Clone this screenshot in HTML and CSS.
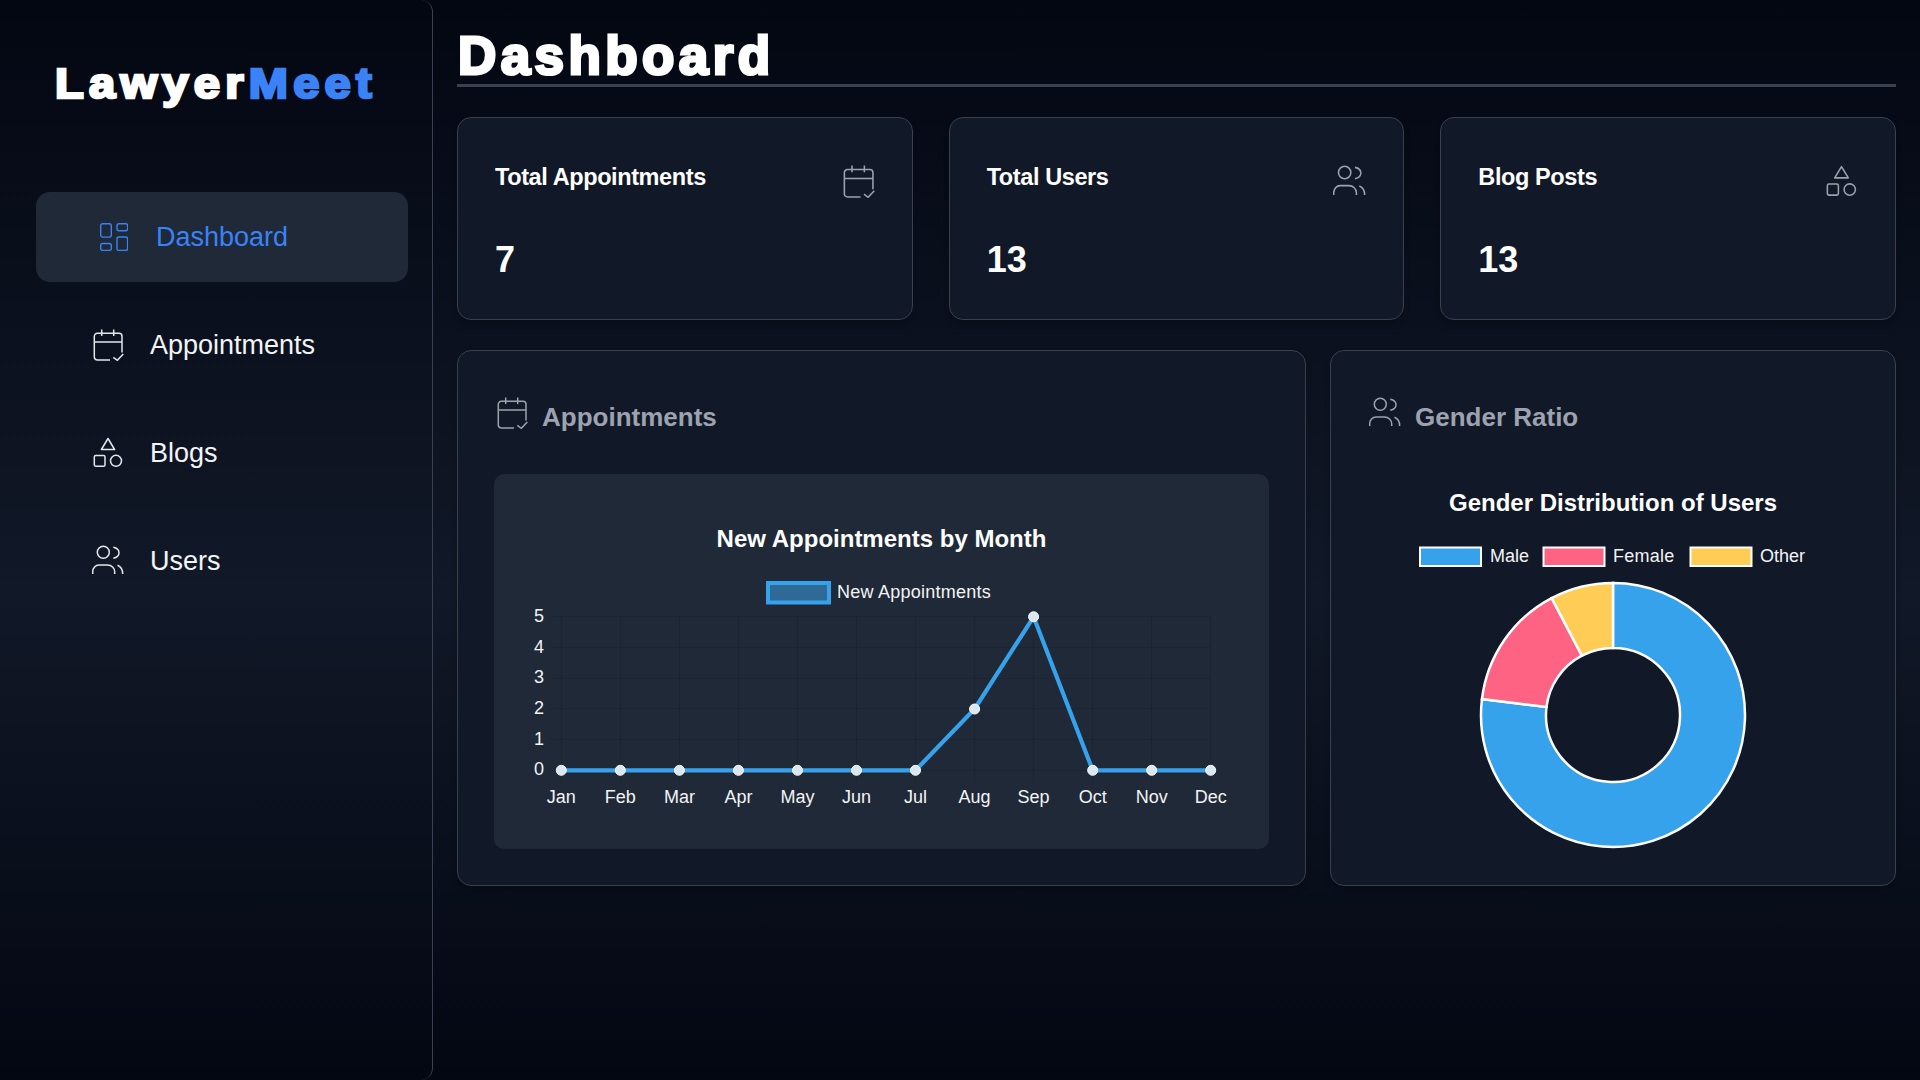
FILE: index.html
```html
<!DOCTYPE html>
<html lang="en">
<head>
  <meta charset="UTF-8">
  <title>LawyerMeet Dashboard</title>
  <link rel="stylesheet" href="styles.css">
</head>
<body>
  <aside class="sidebar">
    <div class="logo">Lawyer<span>Meet</span></div>
    <nav class="nav">
      <a class="nav-item active">
        <svg class="nav-icon" viewBox="0 0 28 28"><rect x="0.7" y="0.7" width="10.6" height="13.4" rx="2"/><rect x="17" y="0.7" width="10.6" height="7" rx="2"/><rect x="0.7" y="20.5" width="10.6" height="7" rx="2"/><rect x="17" y="14" width="10.6" height="13.4" rx="2"/></svg>
        <span>Dashboard</span>
      </a>
      <a class="nav-item">
        <svg class="icon" viewBox="0 0 32 32"><use href="#calendar"/></svg>
        <span>Appointments</span>
      </a>
      <a class="nav-item">
        <svg class="icon" viewBox="0 0 32 32"><use href="#shapes"/></svg>
        <span>Blogs</span>
      </a>
      <a class="nav-item">
        <svg class="icon" viewBox="0 0 32 32"><use href="#users"/></svg>
        <span>Users</span>
      </a>
    </nav>
  </aside>

  <main class="main">
    <h1 class="page-title">Dashboard</h1>

    <section class="stats">
      <div class="stat-card">
        <div class="stat-head">
          <h3>Total Appointments</h3>
          <svg class="icon muted" viewBox="0 0 32 32"><use href="#calendar"/></svg>
        </div>
        <div class="stat-value">7</div>
      </div>
      <div class="stat-card">
        <div class="stat-head">
          <h3>Total Users</h3>
          <svg class="icon muted" viewBox="0 0 32 32"><use href="#users"/></svg>
        </div>
        <div class="stat-value">13</div>
      </div>
      <div class="stat-card">
        <div class="stat-head">
          <h3>Blog Posts</h3>
          <svg class="icon muted" viewBox="0 0 32 32"><use href="#shapes"/></svg>
        </div>
        <div class="stat-value">13</div>
      </div>
    </section>

    <section class="panels">
      <div class="panel">
        <h2 class="panel-title">
          <svg class="icon muted" viewBox="0 0 32 32"><use href="#calendar"/></svg>
          <span>Appointments</span>
        </h2>
        <div class="chart-box">
          <svg class="chart" viewBox="494 474 775 375">
            <text class="chart-title" x="881.5" y="547" text-anchor="middle">New Appointments by Month</text>
            <rect x="768" y="583" width="61" height="19.5" fill="#2f6a96" stroke="#36a2eb" stroke-width="4"/>
            <text class="chart-text wide" x="837" y="597.5">New Appointments</text>

            <g class="grid">
              <path d="M550 616.5H1211M550 647.5H1211M550 678.5H1211M550 708.5H1211M550 739.5H1211M550 770.5H1211"/>
              <path d="M561.5 616V782M620.5 616V782M679.5 616V782M738.5 616V782M797.5 616V782M856.5 616V782M915.5 616V782M974.5 616V782M1033.5 616V782M1092.5 616V782M1151.5 616V782M1210.5 616V782"/>
            </g>

            <g class="chart-text" text-anchor="end">
              <text x="544" y="622">5</text>
              <text x="544" y="652.5">4</text>
              <text x="544" y="683">3</text>
              <text x="544" y="713.500">2</text>
              <text x="544" y="744.500">1</text>
              <text x="544" y="775">0</text>
            </g>
            <g class="chart-text" text-anchor="middle">
              <text x="561.3" y="802.500">Jan</text>
              <text x="620.3" y="802.500">Feb</text>
              <text x="679.4" y="802.500">Mar</text>
              <text x="738.4" y="802.500">Apr</text>
              <text x="797.5" y="802.500">May</text>
              <text x="856.5" y="802.500">Jun</text>
              <text x="915.5" y="802.500">Jul</text>
              <text x="974.6" y="802.500">Aug</text>
              <text x="1033.6" y="802.500">Sep</text>
              <text x="1092.7" y="802.500">Oct</text>
              <text x="1151.7" y="802.500">Nov</text>
              <text x="1210.7" y="802.500">Dec</text>
            </g>

            <polyline class="line" points="561.3,770.3 620.3,770.3 679.4,770.3 738.4,770.3 797.5,770.3 856.5,770.3 915.5,770.3 974.6,709 1033.6,616.8 1092.7,770.3 1151.7,770.3 1210.7,770.3"/>
            <g class="points">
              <circle cx="561.3" cy="770.3" r="5"/>
              <circle cx="620.3" cy="770.3" r="5"/>
              <circle cx="679.4" cy="770.3" r="5"/>
              <circle cx="738.4" cy="770.3" r="5"/>
              <circle cx="797.5" cy="770.3" r="5"/>
              <circle cx="856.5" cy="770.3" r="5"/>
              <circle cx="915.5" cy="770.3" r="5"/>
              <circle cx="974.6" cy="709" r="5"/>
              <circle cx="1033.6" cy="616.8" r="5"/>
              <circle cx="1092.7" cy="770.3" r="5"/>
              <circle cx="1151.7" cy="770.3" r="5"/>
              <circle cx="1210.7" cy="770.3" r="5"/>
            </g>
          </svg>
        </div>
      </div>

      <div class="panel">
        <h2 class="panel-title">
          <svg class="icon muted" viewBox="0 0 32 32"><use href="#users"/></svg>
          <span>Gender Ratio</span>
        </h2>
        <div class="donut-box">
          <svg class="chart" viewBox="1367 474 492 375">
            <text class="chart-title" x="1613" y="511" text-anchor="middle">Gender Distribution of Users</text>

            <g class="legend-box">
              <rect x="1420" y="547.5" width="61" height="18.5" fill="#36a2eb"/>
              <rect x="1543.5" y="547.5" width="61" height="18.5" fill="#ff6384"/>
              <rect x="1690.5" y="547.5" width="61" height="18.5" fill="#ffcd56"/>
            </g>
            <text class="chart-text" x="1490" y="562">Male</text>
            <text class="chart-text wide" x="1613" y="562">Female</text>
            <text class="chart-text" x="1760" y="562">Other</text>

            <g class="slices" transform="translate(1613 715)">
              <path fill="#36a2eb" d="M0 -132A132 132 0 1 1 -131.04 -15.9L-66.5 -8.07A67 67 0 1 0 0 -67Z"/>
              <path fill="#ff6384" d="M-131.04 -15.9A132 132 0 0 1 -61.34 -116.9L-31.13 -59.33A67 67 0 0 0 -66.5 -8.07Z"/>
              <path fill="#ffcd56" d="M-61.34 -116.9A132 132 0 0 1 0 -132L0 -67A67 67 0 0 0 -31.13 -59.33Z"/>
            </g>
          </svg>
        </div>
      </div>
    </section>
  </main>

  <svg class="defs" width="0" height="0">
    <defs>
      <g id="calendar">
        <path d="M18 31H5.3a3 3 0 0 1-3-3V7.3a3 3 0 0 1 3-3H27a3 3 0 0 1 3 3V23.5"/>
        <path d="M2.3 13H30M9.7 0.5V7M21.7 0.5V7"/>
        <path d="M21.3 28.3L25.3 31.3L31.3 25"/>
      </g>
      <g id="shapes">
        <path d="M16 1.5L22.6 12.500H9.4Z" stroke-linejoin="round"/>
        <rect x="2.3" y="18.500" width="10.7" height="10.7" rx="1.5"/>
        <circle cx="24" cy="23.800" r="5.5"/>
      </g>
      <g id="users">
        <circle cx="11.3" cy="7.3" r="6"/>
        <path d="M21.3 2.3C25 3 27 5.200 27 7.800C27 10.400 25 12.600 21.3 13.300"/>
        <path d="M0.700 29V27C0.700 23 3.500 20 7 20H15.500C19.500 20 22.700 23 22.700 27V29"/>
        <path d="M25.500 20.300C28.500 21.500 30.700 24.500 30.700 29"/>
      </g>
    </defs>
  </svg>
</body>
</html>
```

FILE: styles.css
```css
* {
  box-sizing: border-box;
}

body {
  margin: 0;
  height: 1080px;
  display: flex;
  overflow: hidden;
  font-family: "Liberation Sans", Arial, sans-serif;
  color: #fff;
  background: linear-gradient(to bottom, #030712, #111827 55%, #030712);
}

.defs {
  position: absolute;
}

.icon {
  width: 32px;
  height: 32px;
  flex-shrink: 0;
  fill: none;
  stroke: #e5e7eb;
  stroke-width: 1.5;
}

.icon.muted {
  stroke: #9ca3af;
}

/* Sidebar */
.sidebar {
  width: 433px;
  flex-shrink: 0;
  padding: 0 24px 0 36px;
  border-right: 1px solid #374151;
  border-top-right-radius: 12px;
  border-bottom-right-radius: 12px;
}

.logo {
  margin: 58px 0 0 19px;
  font-size: 42px;
  line-height: 52px;
  font-weight: 700;
  letter-spacing: 4.7px;
  white-space: nowrap;
  transform: scaleX(1.12);
  transform-origin: left;
  -webkit-text-stroke: 2.6px #fff;
}

.logo span {
  color: #3b82f6;
  -webkit-text-stroke: 2.6px #3b82f6;
}

.nav {
  margin-top: 82px;
  display: flex;
  flex-direction: column;
  gap: 18px;
}

.nav-item {
  height: 90px;
  padding-left: 56px;
  display: flex;
  align-items: center;
  gap: 26px;
  font-size: 27px;
  color: #f3f4f6;
}

.nav-item.active {
  padding-left: 64px;
  gap: 28px;
  border-radius: 14px;
  background: #1f2937;
  color: #3b82f6;
}

.nav-icon {
  width: 28px;
  height: 28px;
  fill: none;
  stroke: #3b82f6;
  stroke-width: 1.4;
}

/* Main */
.main {
  flex: 1;
  min-width: 0;
  padding: 0 24px;
}

.page-title {
  margin: 26px 0 30px;
  padding-left: 1px;
  height: 61px;
  border-bottom: 3px solid #374151;
  font-size: 53px;
  line-height: 59px;
  letter-spacing: 4.4px;
  -webkit-text-stroke: 3px #fff;
}

.stats {
  display: grid;
  grid-template-columns: repeat(3, 1fr);
  gap: 36px;
}

.stat-card {
  height: 203px;
  padding: 45px 37px 0;
  background: #111827;
  border: 1px solid #374151;
  border-radius: 14px;
  box-shadow: 0 4px 6px rgba(0, 0, 0, 0.2);
}

.stat-head {
  display: flex;
  justify-content: space-between;
}

.stat-head h3 {
  margin: 0;
  font-size: 23.5px;
  line-height: 28px;
  font-weight: 700;
  letter-spacing: -0.4px;
}

.stat-head .icon {
  width: 33px;
  height: 33px;
  margin-top: 2px;
}

.stat-value {
  margin-top: 41px;
  font-size: 36px;
  line-height: 42px;
  font-weight: 700;
}

.panels {
  margin-top: 30px;
  display: grid;
  grid-template-columns: 3fr 2fr;
  gap: 24px;
}

.panel {
  height: 536px;
  padding: 46px 36px 36px;
  background: #111827;
  border: 1px solid #374151;
  border-radius: 14px;
  box-shadow: 0 4px 6px rgba(0, 0, 0, 0.2);
}

.panel-title {
  margin: 0 0 45px 2px;
  height: 32px;
  display: flex;
  align-items: center;
  gap: 14px;
  font-size: 26px;
  font-weight: 700;
  color: #9ca3af;
}

.panel-title span {
  padding-top: 8px;
}

.chart-box {
  height: 375px;
  border-radius: 10px;
  background: #1f2937;
}

.donut-box {
  height: 375px;
}

.chart {
  display: block;
  width: 100%;
  height: 100%;
}

.chart-title {
  font-size: 24px;
  font-weight: 700;
  fill: #fff;
}

.chart-text {
  font-size: 18px;
  fill: #f3f4f6;
}

.wide {
  letter-spacing: 0.25px;
}

.grid {
  fill: none;
  stroke: rgba(0, 0, 0, 0.1);
  stroke-width: 1;
}

.line {
  fill: none;
  stroke: #36a2eb;
  stroke-width: 4.2;
}

.points {
  fill: #dbe7f1;
  stroke: #fff;
  stroke-width: 1;
}

.legend-box {
  stroke: #fff;
  stroke-width: 2;
}

.slices {
  stroke: #fff;
  stroke-width: 2.5;
}
```
